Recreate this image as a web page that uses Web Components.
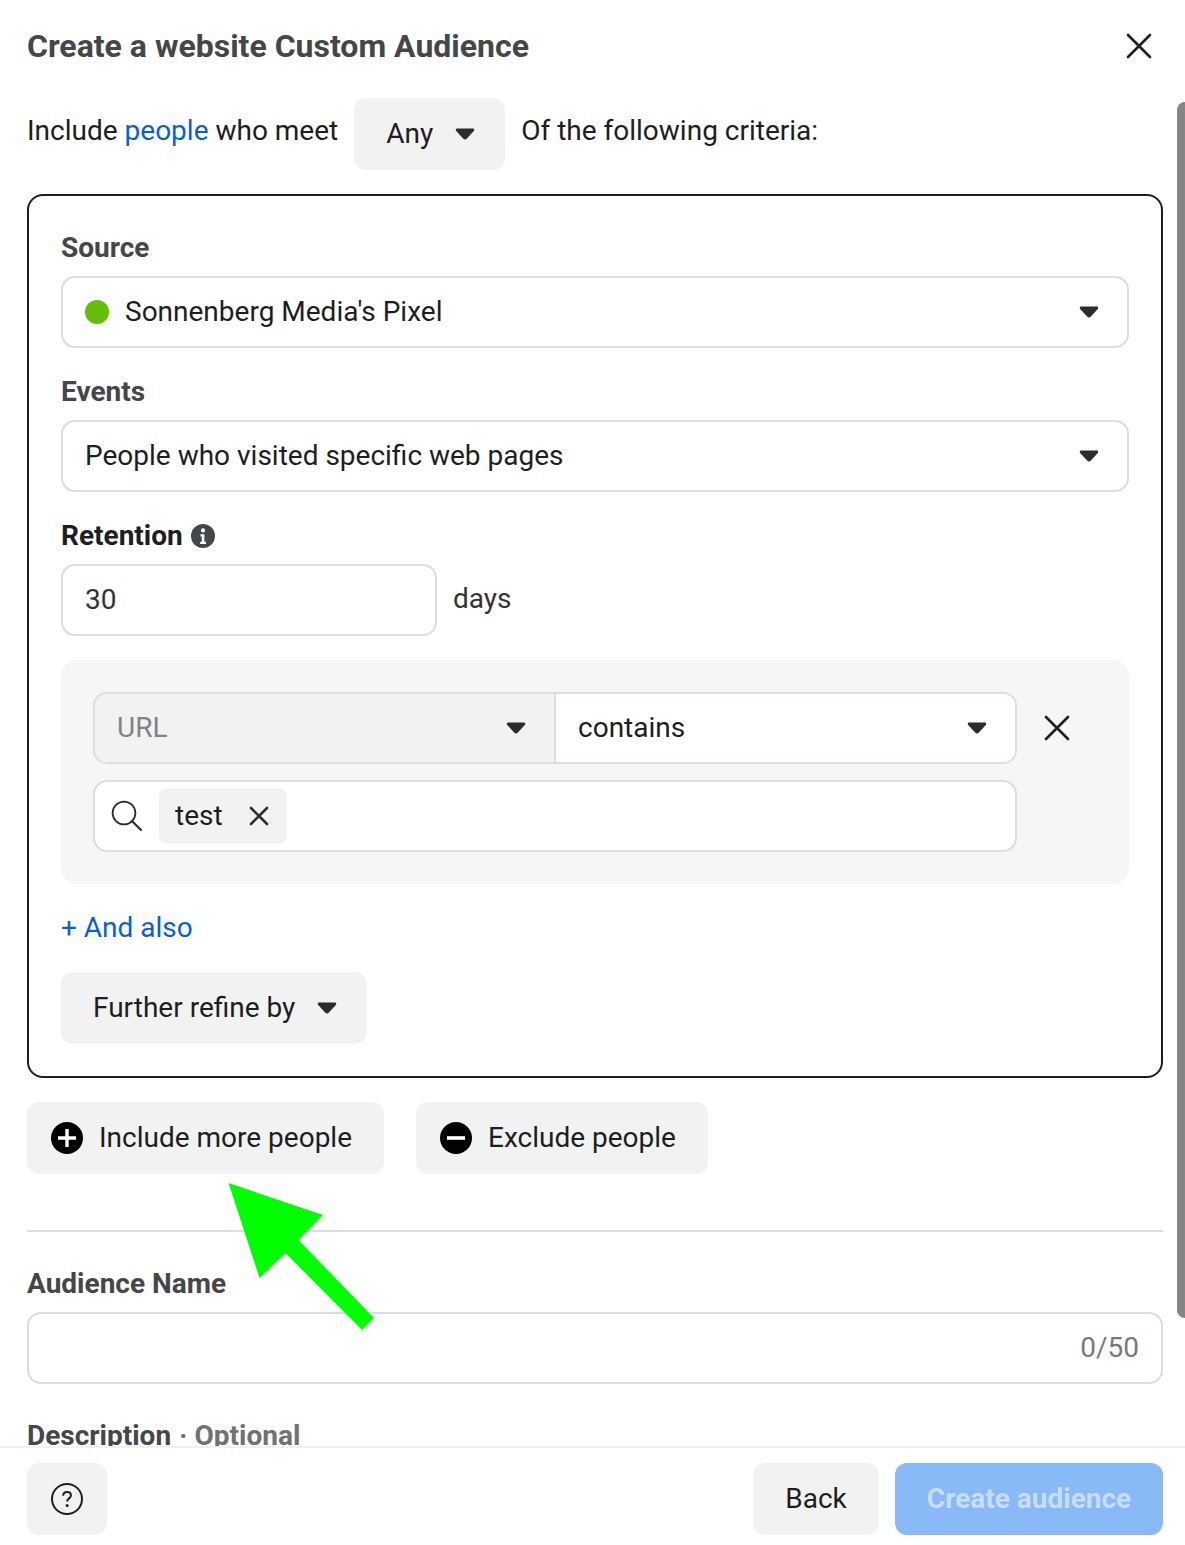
<!DOCTYPE html>
<html>
<head>
<meta charset="utf-8">
<title>Create a website Custom Audience</title>
<style>
    html, body { margin: 0; padding: 0; background: #fff; }
    body { font: 28px/28px Roboto, "Liberation Sans", sans-serif; color: #1c1e21; }
    .link { color: #0a5fcf; }
    .muted { color: #6f7174; font-weight: 700; }
    .lift { position: relative; top: -3px; }
</style>
</head>
<body>

<fb-dialog>
    <span slot="title">Create a website Custom Audience</span>

    <fb-row>
        <span class="lift">Include <span class="link">people</span> who meet</span>
        <fb-button caret style="margin: 0 16px; width: 151px;">Any</fb-button>
        <span class="lift">Of the following criteria:</span>
    </fb-row>

    <fb-card>
        <fb-label>Source</fb-label>
        <fb-select dot>Sonnenberg Media's Pixel</fb-select>

        <fb-label gap>Events</fb-label>
        <fb-select>People who visited specific web pages</fb-select>

        <fb-label gap dark info>Retention</fb-label>
        <fb-row>
            <fb-input style="width: 376px; margin-right: 16px;">30</fb-input>
            <span class="lift" style="color: #333; top: -1px;">days</span>
        </fb-row>

        <fb-rule-panel>
            <fb-select slot="left" flush disabled>URL</fb-select>
            <fb-select slot="right" flush>contains</fb-select>
            <fb-chip slot="chips">test</fb-chip>
        </fb-rule-panel>

        <div class="link" style="margin: 30px 0;">+ And also</div>

        <fb-button caret style="width: 306px;">Further refine by</fb-button>
    </fb-card>

    <fb-row style="margin: 24px 0 0;">
        <fb-button icon="plus" style="width: 357px; margin-right: 32px;">Include more people</fb-button>
        <fb-button icon="minus" style="width: 292px;">Exclude people</fb-button>
    </fb-row>

    <div style="height: 2px; background: #dadde1; margin: 56px 0 36px;"></div>

    <fb-label>Audience Name</fb-label>
    <fb-input count="0/50"></fb-input>

    <fb-label style="margin-top: 36px;">Description <span class="muted" style="margin-left: 1px;">· Optional</span></fb-label>

    <fb-button slot="help" icon="help" style="width: 80px;"></fb-button>
    <fb-button slot="actions" style="width: 126px;">Back</fb-button>
    <fb-button slot="actions" primary style="width: 268px;">Create audience</fb-button>
</fb-dialog>

<script>
// Shared icons
const ICONS = {
    caret: `<svg width="20" height="12" viewBox="0 0 20 12"><path d="M2.2 .6h15.6c1.3 0 1.9 1.4 1 2.3l-6.9 7.6a2.6 2.6 0 0 1-3.8 0l-6.9-7.6c-.9-.9-.3-2.3 1-2.3z" fill="#2b2c2e"/></svg>`,
    close: `<svg width="26" height="26" viewBox="0 0 26 26"><path d="M2 2L24 24M24 2L2 24" stroke="#1c1e21" stroke-width="2.6" stroke-linecap="round"/></svg>`,
    plus: `<svg width="32" height="32" viewBox="0 0 32 32"><circle cx="16" cy="16" r="16" fill="#000"/><path d="M16 7v18M7 16h18" stroke="#fff" stroke-width="3.4"/></svg>`,
    minus: `<svg width="32" height="32" viewBox="0 0 32 32"><circle cx="16" cy="16" r="16" fill="#000"/><path d="M7 16h18" stroke="#fff" stroke-width="3.6"/></svg>`,
    help: `<svg width="32" height="32" viewBox="0 0 32 32"><circle cx="16" cy="16" r="15" fill="none" stroke="#1c1e21" stroke-width="2"/><path d="M12.2 12.8c0-2.3 1.7-3.8 3.9-3.8s3.8 1.4 3.8 3.4c0 3-3.8 3-3.8 6.2" fill="none" stroke="#1c1e21" stroke-width="2"/><circle cx="16.1" cy="22.6" r="1.5" fill="#1c1e21"/></svg>`,
    info: `<svg width="24" height="24" viewBox="0 0 24 24"><circle cx="12" cy="12" r="12" fill="#444649"/><circle cx="12" cy="6.4" r="2.1" fill="#fff"/><path d="M9.4 10.2h4v7.6h1.6v2.2h-5.8v-2.2h1.6v-5.4h-1.4z" fill="#fff"/></svg>`,
    search: `<svg width="32" height="32" viewBox="0 0 32 32"><circle cx="13" cy="13" r="11.4" fill="none" stroke="#2b2c2e" stroke-width="1.8"/><path d="M21 21L30 30" stroke="#2b2c2e" stroke-width="2.2" stroke-linecap="round"/></svg>`,
    cross: `<svg width="20" height="20" viewBox="0 0 20 20"><path d="M2 2L18 18M18 2L2 18" stroke="#2b2c2e" stroke-width="2.6" stroke-linecap="round"/></svg>`,
};

// Base class, sets up the shadow root from the template() string
class FbElement extends HTMLElement {
    constructor() {
        super();
        this.attachShadow({mode: "open"});
        this.shadowRoot.innerHTML = this.template();
    }
    template() { return `<slot></slot>`; }
}

class FbDialog extends FbElement {
    template() {
        return `
<style>
    :host { display: flex; flex-direction: column; position: relative; width: 1185px; height: 1545px; overflow: hidden; background: #fff; }
    header { flex: none; height: 98px; padding: 0 33px 0 27px; display: flex; align-items: center; justify-content: space-between; box-sizing: border-box; }
    .title { font-size: 32px; font-weight: 700; color: #444649; position: relative; top: -3px; }
    .close { display: flex; position: relative; top: -3px; }
    main { flex: 1; min-height: 0; overflow: hidden; padding: 0 22px 0 27px; }
    .thumb { position: absolute; top: 102px; right: 0; width: 8px; height: 1216px; background: #858585; border-radius: 8px 0 0 8px; }
    footer { flex: none; height: 99px; box-sizing: border-box; border-top: 2px solid #eff0f2; padding: 15px 22px 0 27px; display: flex; gap: 16px; }
    .space { flex: 1; }
    .arrow { position: absolute; left: 0; top: 0; pointer-events: none; }
</style>
<header><span class="title"><slot name="title"></slot></span><span class="close">${ICONS.close}</span></header>
<main><slot></slot></main>
<div class="thumb"></div>
<footer><slot name="help"></slot><div class="space"></div><slot name="actions"></slot></footer>
<svg class="arrow" width="1185" height="1545"><polygon points="228.5,1183 323,1215 298.5,1240 374,1318 362,1330 285.5,1253 259.5,1278" fill="#00ff00"/></svg>`;
    }
}
customElements.define("fb-dialog", FbDialog);

class FbRow extends FbElement {
    template() {
        return `<style>:host { display: flex; align-items: center; }</style><slot></slot>`;
    }
}
customElements.define("fb-row", FbRow);

class FbCard extends FbElement {
    template() {
        return `<style>:host { display: block; margin-top: 24px; border: 2px solid #1c1e21; border-radius: 16px; padding: 36px 32px 32px; }</style><slot></slot>`;
    }
}
customElements.define("fb-card", FbCard);

class FbLabel extends FbElement {
    template() {
        const info = this.hasAttribute("info") ? `<span class="i">${ICONS.info}</span>` : "";
        return `
<style>
    :host { display: flex; align-items: center; padding-top: 2px; margin-bottom: 14px; font-size: 28px; font-weight: 700; color: #444649; white-space: pre; }
    :host([gap]) { margin-top: 28px; }
    :host([dark]) { color: #1c1e21; }
    .i { display: flex; margin-left: 8px; }
</style>
<slot></slot>${info}`;
    }
}
customElements.define("fb-label", FbLabel);

class FbSelect extends FbElement {
    template() {
        const dot = this.hasAttribute("dot") ? `<span class="dot"></span>` : "";
        return `
<style>
    :host { display: flex; align-items: center; box-sizing: border-box; height: 72px; padding: 0 28px 0 22px; border: 2px solid #dadde1; border-radius: 14px; background: #fff; color: #1c1e21; }
    :host([flush]) { flex: 1; border: 0; border-radius: 0; height: 68px; }
    :host([disabled]) { background: #f2f2f2; color: #808285; }
    .dot { width: 24px; height: 24px; border-radius: 50%; background: #63be09; margin-right: 16px; }
    .text { flex: 1; }
    svg { display: block; }
</style>
${dot}<span class="text"><slot></slot></span>${ICONS.caret}`;
    }
}
customElements.define("fb-select", FbSelect);

class FbInput extends FbElement {
    template() {
        const count = this.getAttribute("count") || "";
        return `
<style>
    :host { display: flex; align-items: center; box-sizing: border-box; height: 72px; padding: 0 22px; border: 2px solid #dadde1; border-radius: 14px; background: #fff; color: #333; }
    .text { flex: 1; }
    .count { color: #77797c; }
</style>
<span class="text"><slot></slot></span><span class="count">${count}</span>`;
    }
}
customElements.define("fb-input", FbInput);

class FbChip extends FbElement {
    template() {
        return `
<style>
    :host { display: flex; align-items: center; box-sizing: border-box; width: 128px; height: 56px; padding: 0 18px 0 16px; background: #f2f2f2; border-radius: 8px; color: #1c1e21; }
    .text { flex: 1; }
    svg { display: block; }
</style>
<span class="text"><slot></slot></span>${ICONS.cross}`;
    }
}
customElements.define("fb-chip", FbChip);

// The gray URL rule box with its two selects and the search field
class FbRulePanel extends FbElement {
    template() {
        return `
<style>
    :host { display: grid; grid-template-columns: 924px 1fr; row-gap: 16px; align-items: center; margin-top: 24px; padding: 32px 0 32px 32px; background: #f5f6f7; border-radius: 16px; }
    .split { display: flex; box-sizing: border-box; height: 72px; border: 2px solid #dadde1; border-radius: 14px; overflow: hidden; background: #fff; }
    .left { display: flex; width: 459px; flex: none; border-right: 2px solid #dadde1; }
    .right { display: flex; flex: 1; }
    .x { display: flex; justify-content: center; width: 80px; }
    .search { display: flex; align-items: center; box-sizing: border-box; height: 72px; border: 2px solid #dadde1; border-radius: 14px; background: #fff; padding-left: 16px; }
    .search svg { margin-right: 16px; }
    ::slotted(fb-select) { flex: 1; }
</style>
<div class="split">
    <div class="left"><slot name="left"></slot></div>
    <div class="right"><slot name="right"></slot></div>
</div>
<div class="x">${ICONS.close}</div>
<div class="search">${ICONS.search}<slot name="chips"></slot></div>`;
    }
}
customElements.define("fb-rule-panel", FbRulePanel);

class FbButton extends FbElement {
    template() {
        const name = this.getAttribute("icon");
        const icon = name ? `<span class="icon">${ICONS[name]}</span>` : "";
        const caret = this.hasAttribute("caret") ? `<span class="caret">${ICONS.caret}</span>` : "";
        return `
<style>
    :host { display: flex; align-items: center; justify-content: center; box-sizing: border-box; flex: none; height: 72px; background: #f2f2f2; border-radius: 12px; color: #1c1e21; white-space: nowrap; }
    :host([primary]) { background: #8ab9f8; color: #c6ddfb; font-weight: 700; }
    :host([caret]) { justify-content: flex-start; padding-left: 32px; }
    :host([icon]) { justify-content: flex-start; padding-left: 24px; }
    :host([icon=help]) { justify-content: center; padding-left: 0; }
    .icon { display: flex; margin-right: 16px; }
    :host([icon=help]) .icon { margin-right: 0; }
    .caret { display: flex; margin-left: 22px; }
</style>
${icon}<slot></slot>${caret}`;
    }
}
customElements.define("fb-button", FbButton);
</script>
</body>
</html>
